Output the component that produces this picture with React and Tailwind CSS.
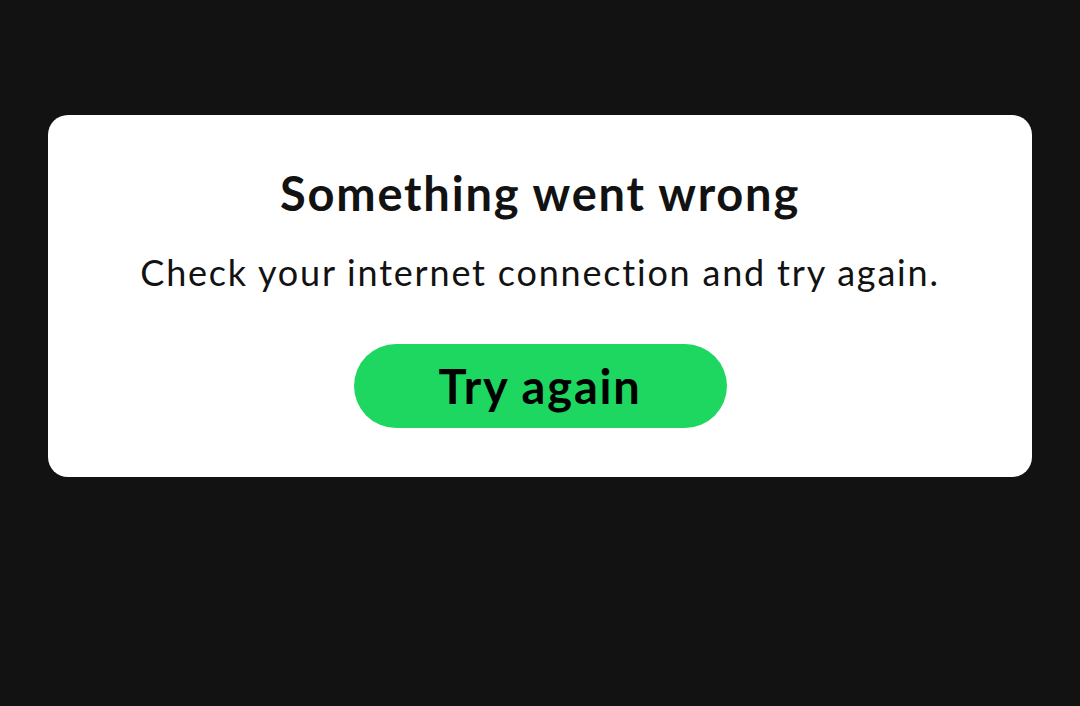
export default function App() {
  return (
    <div className="min-h-[706px] w-full bg-[#121212] px-12 pt-[115px]" style={{ fontFamily: 'Lato, "Noto Sans", sans-serif' }}>
      <div className="flex h-[362px] flex-col items-center rounded-[20px] bg-white px-8 pt-[50px]">
        <h1 className="text-[47px] font-bold leading-[56px] tracking-[1.8px] text-[#121212]">Something went wrong</h1>
        <p className="mt-[29px] text-[36px] leading-[44px] tracking-[1.8px] text-[#121212]">Check your internet connection and try again.</p>
        <button className="mt-[50px] flex h-[84px] w-[373px] items-center justify-center rounded-full bg-[#1ed760] text-[47px] font-bold tracking-[1.8px] text-black">
          Try again
        </button>
      </div>
    </div>
  );
}
